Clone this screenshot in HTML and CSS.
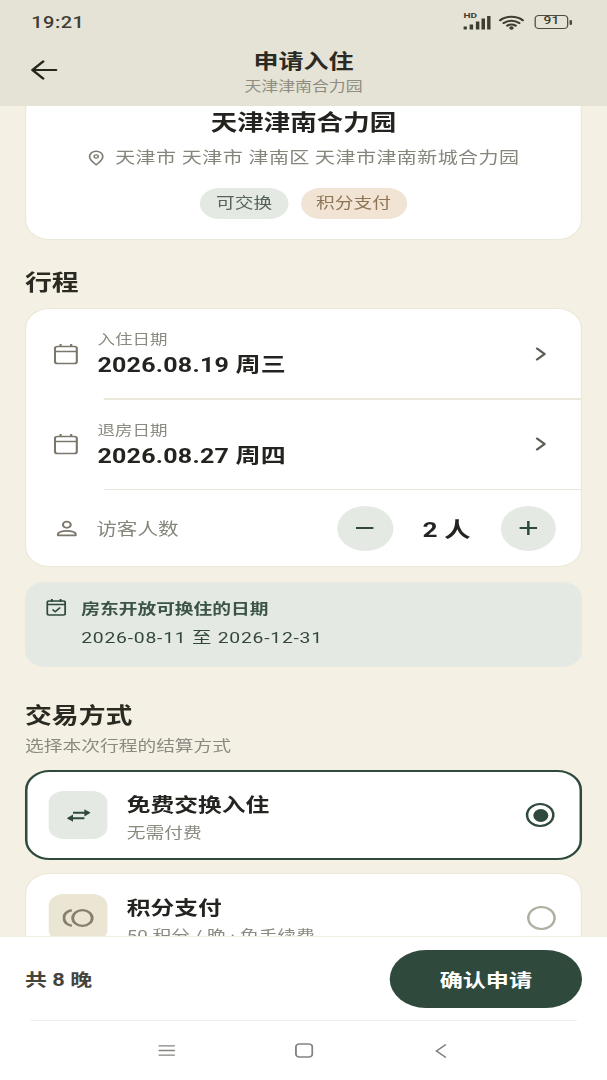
FILE: index.html
```html
<!DOCTYPE html>
<html lang="zh-CN">
<head>
<meta charset="utf-8">
<title>申请入住</title>
<link rel="stylesheet" href="styles.css">
</head>
<body>
<div class="app">
  <header class="topbar">
    <div class="status">
      <span class="clock">19:21</span>
      <div class="status-icons">
        <div class="signal">
          <span class="hd">HD</span>
          <svg class="bars" viewBox="0 0 22 15" width="22" height="15"><path d="M0 11.500h2.800v2.900H0zM5 9.500h2.800v4.900H5zM10 6.500h2.800v7.900H10zM14.500 3.500h2.800v10.900h-2.800zM19 1h2.800v13.400H19z" fill="#3e3d33"/></svg>
        </div>
        <svg class="wifi" viewBox="0 0 20 15" width="20" height="15"><g fill="none" stroke="#3e3d33" stroke-width="2.100" stroke-linecap="round"><path d="M1 5.200C6 .6 14 .6 19 5.200"/><path d="M3.800 8C7.500 4.900 12.500 4.900 16.200 8"/><path d="M6.700 10.700c2-1.500 4.600-1.500 6.600 0"/></g><circle cx="10" cy="13" r="1.800" fill="#3e3d33"/></svg>
        <div class="battery"><span class="battery-body">91</span><span class="battery-tip"></span></div>
      </div>
    </div>
    <div class="nav">
      <svg class="back" viewBox="0 0 22 20" width="22" height="20"><path d="M21 10H2M10.500 1.500 2 10l8.500 8.500" fill="none" stroke="#26261f" stroke-width="2.200" stroke-linecap="round" stroke-linejoin="round"/></svg>
      <div class="nav-titles">
        <div class="nav-title">申请入住</div>
        <div class="nav-sub">天津津南合力园</div>
      </div>
    </div>
  </header>

  <main class="scroll">
    <section class="card hero">
      <h1 class="hero-title">天津津南合力园</h1>
      <div class="address">
        <svg viewBox="0 0 14 16" width="14" height="16"><path d="M7 1.200a5.300 5.300 0 0 0-5.300 5.300C1.700 10 7 14.800 7 14.800s5.300-4.800 5.300-8.300A5.300 5.300 0 0 0 7 1.200z" fill="none" stroke="#7f7f75" stroke-width="1.400"/><circle cx="7" cy="6.500" r="1.600" fill="none" stroke="#7f7f75" stroke-width="1.300"/></svg>
        <span>天津市 天津市 津南区 天津市津南新城合力园</span>
      </div>
      <div class="tags">
        <span class="tag tag-green">可交换</span>
        <span class="tag tag-tan">积分支付</span>
      </div>
    </section>

    <h2 class="heading trip-heading">行程</h2>
    <section class="card trip">
      <div class="row date-row">
        <svg class="cal" viewBox="0 0 20 22" width="20" height="22"><g fill="none" stroke="#7c776b" stroke-width="1.700"><rect x="1" y="3.500" width="17.500" height="17" rx="2"/><path d="M1 8.500h17.500M5.500 1v3M14 1v3"/></g></svg>
        <div class="date-text">
          <div class="label">入住日期</div>
          <div class="value">2026.08.19 周三</div>
        </div>
        <svg class="chev" viewBox="0 0 10 14" width="10" height="14"><path d="M2 1.500 8 7l-6 5.500" fill="none" stroke="#5c5c54" stroke-width="2" stroke-linecap="round" stroke-linejoin="round"/></svg>
      </div>
      <div class="rule"></div>
      <div class="row date-row">
        <svg class="cal" viewBox="0 0 20 22" width="20" height="22"><g fill="none" stroke="#7c776b" stroke-width="1.700"><rect x="1" y="3.500" width="17.500" height="17" rx="2"/><path d="M1 8.500h17.500M5.500 1v3M14 1v3"/></g></svg>
        <div class="date-text">
          <div class="label">退房日期</div>
          <div class="value">2026.08.27 周四</div>
        </div>
        <svg class="chev" viewBox="0 0 10 14" width="10" height="14"><path d="M2 1.500 8 7l-6 5.500" fill="none" stroke="#5c5c54" stroke-width="2" stroke-linecap="round" stroke-linejoin="round"/></svg>
      </div>
      <div class="rule"></div>
      <div class="row guest-row">
        <svg class="person" viewBox="0 0 18 18" width="17" height="17"><g fill="none" stroke="#7c776b" stroke-width="1.800"><circle cx="9" cy="5" r="3.300"/><path d="M1.500 16.200v-1.400c0-2 3.500-3.300 7.500-3.300s7.500 1.300 7.500 3.300v1.400z" stroke-linejoin="round"/></g></svg>
        <span class="guest-label">访客人数</span>
        <button class="step" type="button"><svg viewBox="0 0 16 16" width="16" height="16"><path d="M1 8h14" stroke="#2f4a3c" stroke-width="2"/></svg></button>
        <span class="guest-count">2 人</span>
        <button class="step" type="button"><svg viewBox="0 0 16 16" width="16" height="16"><path d="M1 8h14M8 1v14" stroke="#2f4a3c" stroke-width="2"/></svg></button>
      </div>
    </section>

    <section class="info">
      <svg class="info-icon" viewBox="0 0 16 18" width="16" height="18"><g fill="none" stroke="#2f4a3c" stroke-width="1.500"><rect x=".8" y="3" width="14.400" height="14" rx="1.500"/><path d="M.8 6.500h14.400M4.500 1v3M11.500 1v3"/><path d="m5 11.500 2.200 2.200 4-4.200"/></g></svg>
      <div class="info-text">
        <div class="info-title">房东开放可换住的日期</div>
        <div class="info-date">2026-08-11 至 2026-12-31</div>
      </div>
    </section>

    <h2 class="heading pay-heading">交易方式</h2>
    <p class="pay-sub">选择本次行程的结算方式</p>

    <section class="option option-on">
      <div class="opt-icon opt-green">
        <svg viewBox="0 0 22 18" width="20" height="17"><g fill="none" stroke="#2f4a3c" stroke-width="2"><path d="M6 6h14"/><path d="M2 12h14"/></g><path d="M16 2 21.500 6 16 10zM6 8 .5 12 6 16z" fill="#2f4a3c"/></svg>
      </div>
      <div class="opt-text">
        <div class="opt-title">免费交换入住</div>
        <div class="opt-sub">无需付费</div>
      </div>
      <span class="radio radio-on"></span>
    </section>

    <section class="option option-off">
      <div class="opt-icon opt-tan">
        <svg viewBox="0 0 26 20" width="26" height="20"><g fill="none" stroke="#857f6c" stroke-width="2.300"><circle cx="16" cy="10" r="7.800"/><path d="M7.500 2.200C3.500 3.300 1.200 6.300 1.200 10s2.300 6.700 6.300 7.800"/></g></svg>
      </div>
      <div class="opt-text">
        <div class="opt-title">积分支付</div>
        <div class="opt-sub">50 积分 / 晚 · 免手续费</div>
      </div>
      <span class="radio"></span>
    </section>
  </main>

  <footer class="footer">
    <div class="action">
      <span class="total">共 8 晚</span>
      <button class="confirm" type="button">确认申请</button>
    </div>
    <div class="footer-rule"></div>
    <nav class="sysnav">
      <span class="sys-cell"><svg viewBox="0 0 16 14" width="15" height="13"><path d="M1 2h14M1 7h14M1 12h14" stroke="#84847f" stroke-width="1.500"/></svg></span>
      <span class="sys-cell"><svg viewBox="0 0 16 16" width="15" height="15"><rect x="1" y="1" width="14" height="14" rx="3" fill="none" stroke="#84847f" stroke-width="1.600"/></svg></span>
      <span class="sys-cell"><svg viewBox="0 0 10 16" width="10" height="16"><path d="M9 1.500 1.500 8 9 14.500" fill="none" stroke="#84847f" stroke-width="1.500"/></svg></span>
    </nav>
  </footer>
</div>
</body>
</html>
```
FILE: styles.css
```css
* { box-sizing: border-box; }
html, body { margin: 0; padding: 0; height: 1080px; overflow: hidden; background: #f4f0e4; }
body { font-family: Roboto, "Noto Sans CJK SC", sans-serif; color: #232320; }
h1, h2, p { margin: 0; }
button { border: 0; padding: 0; font: inherit; }

/* The reference is stretched horizontally: lay out at 486px, widen to 607px. */
.app {
  width: 486px;
  height: 1080px;
  display: flex;
  flex-direction: column;
  overflow: hidden;
  transform: scaleX(1.249);
  transform-origin: 0 0;
}

.topbar { height: 106px; flex: none; background: #e5e2d6; position: relative; z-index: 2; }
.status { height: 44px; display: flex; align-items: center; justify-content: space-between; padding: 0 28px 0 25px; }
.clock { font-size: 16px; font-weight: 500; color: #3e3d33; letter-spacing: .4px; }
.status-icons { display: flex; align-items: center; gap: 6px; }
.signal { position: relative; width: 22px; height: 15px; }
.hd { position: absolute; left: 0; top: -3px; font-size: 8px; line-height: 8px; font-weight: 700; color: #3e3d33; }
.bars { display: block; }
.wifi { width: 21px; }
.battery { display: flex; align-items: center; margin-left: 2px; }
.battery-body { width: 27px; height: 14px; border: 1.800px solid #4c4b40; border-radius: 3.500px; font-size: 11px; line-height: 10.500px; font-weight: 500; text-align: center; color: #3e3d33; }
.battery-tip { width: 2px; height: 5px; margin-left: 1px; background: #4c4b40; border-radius: 1px; }

.nav { position: relative; height: 62px; display: flex; justify-content: center; }
.back { position: absolute; left: 24px; top: 16px; }
.nav-titles { text-align: center; }
.nav-title { font-size: 20px; line-height: 28px; font-weight: 700; color: #2a2a22; margin-top: 4px; }
.nav-sub { font-size: 13.500px; line-height: 20px; color: #8e8d80; }

.scroll { flex: 1; min-height: 0; overflow: hidden; padding: 0 20px; }

.card { background: #fff; border: 1px solid #ebe7d9; border-radius: 20px; }
.hero { margin-top: -30px; padding: 31px 0 20px; display: flex; flex-direction: column; align-items: center; }
.hero-title { font-size: 21.200px; line-height: 30px; font-weight: 700; color: #232320; }
.address { display: flex; align-items: center; gap: 8px; margin-top: 7px; font-size: 16px; line-height: 26px; letter-spacing: .35px; color: #85857b; }
.tags { display: flex; gap: 10px; margin-top: 17px; }
.tag { height: 31px; padding: 0 12.500px; border-radius: 16px; font-size: 15px; line-height: 31px; }
.tag-green { background: #e4eae3; color: #55635a; }
.tag-tan { background: #f1e4d5; color: #8e7455; }

.heading { font-size: 21.500px; line-height: 30px; font-weight: 700; color: #2a2a22; }
.trip-heading { margin-top: 28px; }
.trip { margin-top: 10px; height: 259px; display: flex; flex-direction: column; }
.row { display: flex; align-items: center; padding: 0 23px 0 22px; }
.date-row { height: 89px; }
.cal { flex: none; }
.date-text { flex: 1; margin-left: 15px; }
.label { font-size: 14px; line-height: 20px; color: #8a8a80; }
.value { font-size: 20px; line-height: 26px; font-weight: 700; color: #232320; letter-spacing: .2px; margin-top: 3px; }
.chev { flex: none; margin-right: 4px; }
.rule { height: 1.500px; flex: none; margin-left: 62px; background: #ebe7db; }
.guest-row { flex: 1; padding: 0 20px 0 23.500px; }
.person { flex: none; }
.guest-label { flex: 1; margin-left: 15.500px; font-size: 16.500px; color: #85857b; }
.step { width: 44.500px; height: 45px; border-radius: 50%; background: #e4eae3; display: flex; align-items: center; justify-content: center; }
.guest-count { width: 86px; text-align: center; font-size: 21px; font-weight: 700; color: #232320; }

.info { margin-top: 15px; height: 85px; border-radius: 16px; background: #e4eae3; display: flex; padding: 16px 17px 0; gap: 12px; }
.info-icon { flex: none; }
.info-title { font-size: 15px; line-height: 22px; font-weight: 700; color: #3c5447; }
.info-date { font-size: 15.500px; line-height: 22px; color: #33463b; letter-spacing: .6px; margin-top: 7px; }

.pay-heading { margin-top: 34px; }
.pay-sub { margin-top: 4px; font-size: 15px; line-height: 22px; color: #8a8a80; }

.option { display: flex; align-items: center; background: #fff; border-radius: 20px; }
.option-on { margin-top: 13px; height: 90px; border: 2px solid #2f4a3c; padding: 0 20px 0 17px; }
.option-off { margin-top: 13px; height: 90px; border: 1px solid #ebe7d9; padding: 0 20px 0 18px; }
.opt-icon { width: 47px; height: 48px; flex: none; border-radius: 12px; display: flex; align-items: center; justify-content: center; }
.opt-green { background: #e4eae3; }
.opt-tan { background: #ebe6d4; }
.opt-text { flex: 1; margin-left: 15.500px; padding-top: 7px; }
.opt-title { font-size: 19px; line-height: 26px; font-weight: 700; color: #232320; }
.opt-sub { font-size: 15px; line-height: 22px; color: #8a8a80; margin-top: 3px; }
.radio { width: 23px; height: 24px; flex: none; border-radius: 50%; border: 2px solid #b0aea0; }
.radio-on { border: 2.500px solid #2f4a3c; position: relative; }
.radio-on::after { content: ""; position: absolute; inset: 3.500px; border-radius: 50%; background: #2f4a3c; }

.footer { height: 144px; flex: none; background: #fff; position: relative; z-index: 2; border-top: 1px solid #f0ede4; display: flex; flex-direction: column; padding: 0 20px; }
.action { display: flex; align-items: center; justify-content: space-between; flex: none; height: 83px; }
.total { font-size: 17.500px; font-weight: 700; color: #45443a; }
.confirm { width: 154px; height: 58px; border-radius: 29px; background: #2f4a3c; color: #fff; font-size: 18.500px; font-weight: 700; }
.footer-rule { height: 1px; flex: none; margin: 0 4px; background: #f0efea; }
.sysnav { flex: 1; display: flex; align-items: center; justify-content: center; gap: 90px; }
.sys-cell { width: 20px; display: flex; justify-content: center; }
```
